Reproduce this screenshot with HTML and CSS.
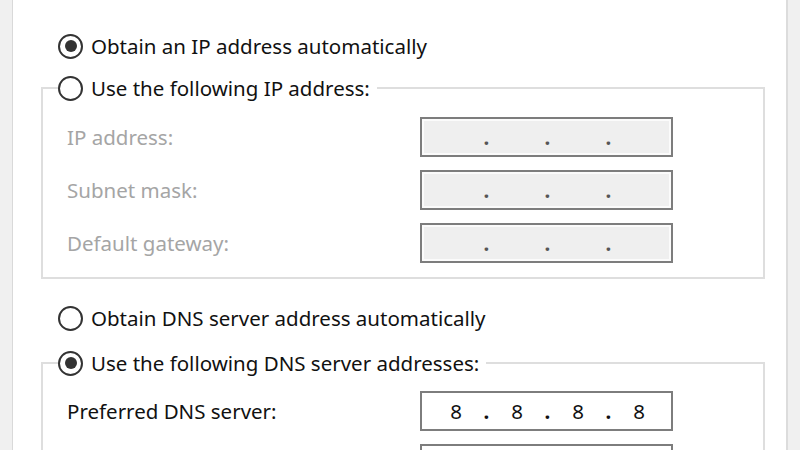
FILE: index.html
```html
<!DOCTYPE html>
<html lang="en">
<head>
  <meta charset="UTF-8">
  <title>Internet Protocol Version 4 (TCP/IPv4) Properties</title>
  <link rel="stylesheet" href="styles.css">
</head>
<body>
  <div class="side side-left"></div>

  <div class="panel">
    <label class="option">
      <span class="radio checked"></span>
      <span>Obtain an IP address automatically</span>
    </label>

    <fieldset class="group">
      <legend class="option">
        <span class="radio"></span>
        <span>Use the following IP address:</span>
      </legend>
      <div class="rows first">
        <div class="row">
          <span class="label disabled">IP address:</span>
          <div class="ip-box disabled">
            <span></span><span class="dot">.</span><span></span><span class="dot">.</span><span></span><span class="dot">.</span><span></span>
          </div>
        </div>
        <div class="row">
          <span class="label disabled">Subnet mask:</span>
          <div class="ip-box disabled">
            <span></span><span class="dot">.</span><span></span><span class="dot">.</span><span></span><span class="dot">.</span><span></span>
          </div>
        </div>
        <div class="row">
          <span class="label disabled">Default gateway:</span>
          <div class="ip-box disabled">
            <span></span><span class="dot">.</span><span></span><span class="dot">.</span><span></span><span class="dot">.</span><span></span>
          </div>
        </div>
      </div>
    </fieldset>

    <label class="option dns-auto">
      <span class="radio"></span>
      <span>Obtain DNS server address automatically</span>
    </label>

    <fieldset class="group dns">
      <legend class="option">
        <span class="radio checked"></span>
        <span>Use the following DNS server addresses:</span>
      </legend>
      <div class="rows second">
        <div class="row">
          <span class="label">Preferred DNS server:</span>
          <div class="ip-box">
            <span>8</span><span class="dot">.</span><span>8</span><span class="dot">.</span><span>8</span><span class="dot">.</span><span>8</span>
          </div>
        </div>
        <!-- alternate server row, only its top edge shows -->
        <div class="row">
          <span class="label"></span>
          <div class="ip-box"></div>
        </div>
      </div>
    </fieldset>
  </div>

  <div class="side side-right"></div>
</body>
</html>
```

FILE: styles.css
```css
body {
  margin: 0;
  height: 450px;
  overflow: hidden;
  display: flex;
  font-family: "Noto Sans", "Open Sans", sans-serif;
  font-size: 20.5px;
  color: #111;
  background: #ffffff;
}

.side {
  width: 12px;
  background: #f0f0f0;
  flex: none;
}

.side-left {
  border-right: 1px solid #d9d9d9;
}

.side-right {
  border-left: 2px solid #dcdcdc;
}

.panel {
  flex: 1;
  padding: 32px 21px 0 28px;
  background: #ffffff;
}

/* radio + text */
.option {
  display: flex;
  align-items: center;
  gap: 8px;
  height: 28px;
  margin-left: 17px;
  white-space: nowrap;
}

.radio {
  box-sizing: border-box;
  width: 25px;
  height: 25px;
  border: 2px solid #333;
  border-radius: 50%;
  display: flex;
  align-items: center;
  justify-content: center;
  background: #fff;
}

.radio.checked::after {
  content: "";
  width: 12px;
  height: 12px;
  border-radius: 50%;
  background: #333;
}

.group {
  margin: 14px 0 0 0;
  padding: 0 0 14px 15px;
  border: 2px solid #dedede;
  min-width: 0;
}

.group legend.option {
  margin-left: 0;
  padding: 0 7px 0 0;
}

.group.dns {
  margin-top: 17px;
  border-bottom: none;
  padding-bottom: 40px;
}

.dns-auto {
  margin-top: 25px;
}

.rows {
  display: flex;
  flex-direction: column;
  gap: 13px;
  padding-left: 9px;
}

.rows.first {
  margin-top: 15px;
}

.rows.second {
  margin-top: 14px;
}

.row {
  display: grid;
  grid-template-columns: 353px 253px;
  align-items: center;
}

.label.disabled {
  color: #a5a5a5;
}

.ip-box {
  box-sizing: border-box;
  height: 40px;
  border: 2px solid #7d7d7d;
  background: #fff;
  display: grid;
  grid-template-columns: 40px 21px 40px 21px 40px 21px 40px;
  padding-left: 14px;
  align-items: center;
  text-align: center;
  color: #111;
}

.ip-box.disabled {
  background: #efefef;
  box-shadow: inset 0 0 0 2px #fbfbfb;
  color: #555;
}

.dot {
  font-weight: bold;
}
```
